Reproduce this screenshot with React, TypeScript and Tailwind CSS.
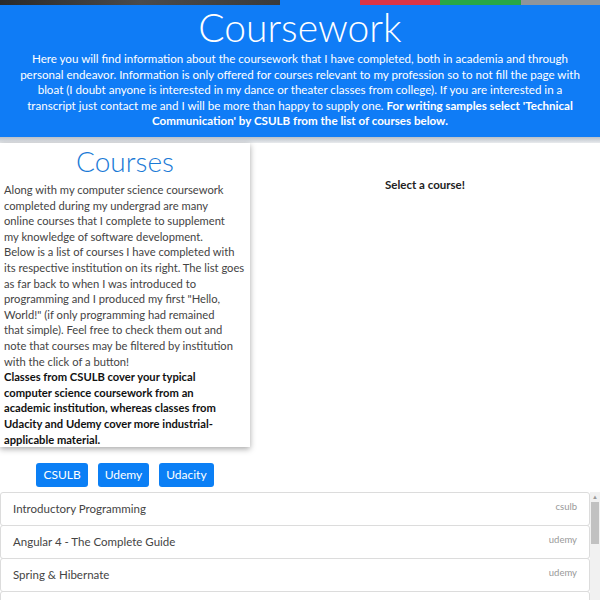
import React from "react";

const courses = [
  { name: "Introductory Programming", inst: "csulb" },
  { name: "Angular 4 - The Complete Guide", inst: "udemy" },
  { name: "Spring & Hibernate", inst: "udemy" },
];

const cardLines = [
  "Along with my computer science coursework",
  "completed during my undergrad are many",
  "online courses that I complete to supplement",
  "my knowledge of software development.",
  "Below is a list of courses I have completed with",
  "its respective institution on its right. The list goes",
  "as far back to when I was introduced to",
  "programming and I produced my first \"Hello,",
  "World!\" (if only programming had remained",
  "that simple). Feel free to check them out and",
  "note that courses may be filtered by institution",
  "with the click of a button!",
];

const cardBold = [
  "Classes from CSULB cover your typical",
  "computer science coursework from an",
  "academic institution, whereas classes from",
  "Udacity and Udemy cover more industrial-",
  "applicable material.",
];

export default function App() {
  return (
    <div className="w-[600px] h-[600px] overflow-hidden bg-white font-['Lato',sans-serif]">
      <div className="flex h-[5px]">
        <div className="w-[280px] bg-gradient-to-r from-[#2a2a2a] via-[#4a4a4a] to-[#3a3a3a]" />
        <div className="w-[80px] bg-[#0f7cf6]" />
        <div className="w-[80px] bg-[#dc3545]" />
        <div className="w-[81px] bg-[#28a745]" />
        <div className="flex-1 bg-[#8f959b]" />
      </div>
      <header className="bg-[#0f7cf6] text-white text-center h-[132px] px-[6px]">
        <h1 className="text-[39px] leading-[42px] font-light pt-[1px]">Coursework</h1>
        <p className="text-[11.6px] leading-[15.5px] mt-[3px] whitespace-nowrap">
          <span className="block">
            Here you will find information about the coursework that I have completed, both in academia and through
          </span>
          <span className="block">
            personal endeavor. Information is only offered for courses relevant to my profession so to not fill the page with
          </span>
          <span className="block">
            bloat (I doubt anyone is interested in my dance or theater classes from college). If you are interested in a
          </span>
          <span className="block">
            transcript just contact me and I will be more than happy to supply one.{" "}
            <b className="font-bold">For writing samples select 'Technical</b>
          </span>
          <span className="block font-bold">Communication' by CSULB from the list of courses below.</span>
        </p>
      </header>
      <div className="h-[6px] bg-gradient-to-b from-[#b9c0c8] to-[#e8eaed]" />
      <div className="flex">
        <div className="w-[250px] flex flex-col">
          <div className="bg-white shadow-[0_2px_6px_rgba(0,0,0,0.35)] h-[304px]">
            <h2 className="text-center text-[28px] leading-[36px] text-[#1a7ad6] font-light">Courses</h2>
            <div className="px-[4px] text-[11.2px] leading-[15.6px] text-[#444] mt-[3px] whitespace-nowrap">
              {cardLines.map((l) => (
                <span key={l} className="block">
                  {l}
                </span>
              ))}
              {cardBold.map((l) => (
                <span key={l} className="block font-bold text-[#111]">
                  {l}
                </span>
              ))}
            </div>
          </div>
          <div className="flex justify-center gap-[10px] mt-[16px]">
            {["CSULB", "Udemy", "Udacity"].map((b) => (
              <button
                key={b}
                className="h-[24px] px-[7px] rounded-[3px] bg-[#0b7ff5] text-white text-[12px]"
              >
                {b}
              </button>
            ))}
          </div>
        </div>
        <div className="flex-1 flex justify-center pt-[33px]">
          <span className="text-[11.5px] font-bold text-[#222]">Select a course!</span>
        </div>
      </div>
      <div className="flex mt-[5px]">
        <div className="flex-1 flex flex-col">
          {courses.map((c) => (
            <div
              key={c.name}
              className="h-[34px] -mb-px border border-[#dcdcdc] rounded-[3px] bg-white flex items-center justify-between pl-[12px] pr-[12px]"
            >
              <span className="text-[11.5px] text-[#444]">{c.name}</span>
              <span className="text-[9.5px] text-[#999] -mt-[4px]">{c.inst}</span>
            </div>
          ))}
          <div className="h-[34px] border border-[#dcdcdc] rounded-[3px] bg-white" />
        </div>
        <div className="w-[10px] flex flex-col bg-[#f1f1f1] h-[120px]">
          <div className="h-[10px] flex items-center justify-center text-[6px] text-[#999] leading-none">▲</div>
          <div className="h-[42px] mx-[1px] bg-[#c1c1c1]" />
        </div>
      </div>
    </div>
  );
}
